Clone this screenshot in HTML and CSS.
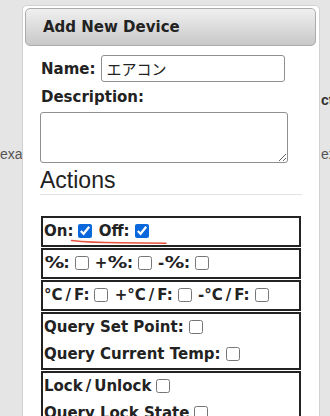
FILE: index.html
```html
<!DOCTYPE html>
<html lang="ja">
<head>
	<meta charset="UTF-8">
	<meta name="viewport" content="width=device-width,initial-scale=1">
	<title>Add New Device</title>
	<link rel="stylesheet" href="styles.css">
</head>
<body>
	<div class="page">
		<div class="bg-line bg-bold"><span></span><span>ct</span></div>
		<div class="bg-line"><span>example</span><span>ex</span></div>
	</div>

	<div class="dialog">
		<div class="dialog-head">Add New Device</div>
		<div class="dialog-body">
			<div class="name-row">
				<label class="lbl" for="devName">Name:</label>
				<input class="txt" id="devName" type="text" value="エアコン">
			</div>
			<label class="lbl desc-lbl" for="devDesc">Description:</label>
			<textarea class="desc" id="devDesc"></textarea>

			<h2 class="section">Actions</h2>

			<div class="actions">
				<div class="box box-mark">
					<div class="row">
						<label>On:<input type="checkbox" checked></label>
						<label>Off:<input type="checkbox" checked></label>
					</div>
					<!-- 赤い下線 -->
					<svg class="mark" width="98" height="6" viewBox="0 0 98 6">
						<path d="M1.5 1.5 Q 20 3.6 50 3.8 T 96 4.2" fill="none" stroke="#e5533e" stroke-width="1.5" stroke-linecap="round"/>
					</svg>
				</div>
				<div class="box">
					<div class="row">
						<label><span class="pct">%</span>:<input type="checkbox"></label>
						<label>+<span class="pct">%</span>:<input type="checkbox"></label>
						<label>-<span class="pct">%</span>:<input type="checkbox"></label>
					</div>
				</div>
				<div class="box">
					<div class="row">
						<label>°C<span class="sl">/</span>F:<input type="checkbox"></label>
						<label>+°C<span class="sl">/</span>F:<input type="checkbox"></label>
						<label>-°C<span class="sl">/</span>F:<input type="checkbox"></label>
					</div>
				</div>
				<div class="box">
					<div class="row"><label>Query Set Point:<input type="checkbox"></label></div>
					<div class="row"><label>Query Current Temp:<input type="checkbox"></label></div>
				</div>
				<div class="box">
					<div class="row"><label>Lock<span class="sl">/</span>Unlock<input type="checkbox"></label></div>
					<div class="row"><label>Query Lock State<input type="checkbox"></label></div>
				</div>
			</div>
		</div>
	</div>
</body>
</html>
```

FILE: styles.css
```css
*{
    margin: 0;
    padding: 0;
    box-sizing: border-box;
}
html, body{
    width: 330px;
    height: 416px;
    overflow: hidden;
}
body{
    background: #e5e5e5;
    font-family: "DejaVu Sans", Verdana, sans-serif;
    color: #222;
    position: relative;
}

/* 背景のページ */
.page{
    padding-top: 91px;
    font-family: "Liberation Sans", Arial, sans-serif;
    font-size: 14px;
    color: #555;
}
.bg-line{
    display: grid;
    grid-template-columns: 321px 1fr;
    height: 18px;
    line-height: 18px;
    white-space: nowrap;
    overflow: hidden;
}
.bg-line + .bg-line{
    margin-top: 36px;
}
.bg-bold{
    font-weight: bold;
    color: #333;
}

/* ダイアログ */
.dialog{
    position: absolute;
    top: 5px;
    left: 22px;
    width: 298px;
    height: 430px;
    background: #fff;
    border: 1px solid #d2d2d2;
    border-radius: 5px;
    padding: 2px 3px 0 2px;
}
.dialog-head{
    height: 38px;
    line-height: 36px;
    padding-left: 17px;
    border: 1px solid #ababab;
    border-radius: 5px;
    background: linear-gradient(#f0f0f0, #c8c8c8);
    font-size: 15px;
    font-weight: bold;
    color: #222;
}
.dialog-body{
    padding: 0 14px 0 15px;
}
.lbl{
    font-size: 15px;
    font-weight: bold;
}
.name-row{
    display: flex;
    align-items: center;
    gap: 6px;
    margin-top: 9px;
    padding-left: 1px;
}
.txt{
    width: 184px;
    height: 27px;
    padding: 0 4px;
    border: 1px solid #8f8f8f;
    border-radius: 3px;
    font-family: "Noto Sans CJK JP", sans-serif;
    font-size: 15px;
    color: #222;
    outline: none;
}
.desc-lbl{
    display: block;
    line-height: 20px;
    margin-top: 5px;
    padding-left: 1px;
}
.desc{
    display: block;
    width: 248px;
    height: 51px;
    margin-top: 5px;
    border: 1px solid #8f8f8f;
    border-radius: 3px;
}
.section{
    margin-top: 4px;
    padding-bottom: 1px;
    line-height: 26px;
    font-family: "Liberation Sans", Arial, sans-serif;
    font-size: 23px;
    font-weight: normal;
    color: #222;
    border-bottom: 1px solid #e2e2e2;
}

/* アクション */
.actions{
    margin-top: 21px;
}
.box{
    width: 260px;
    margin: 0 0 1px 1px;
    padding: 0 1px;
    border: 2px solid #222;
}
.box-mark{
    position: relative;
}
.row{
    height: 27px;
    line-height: 27px;
    font-size: 15px;
    font-weight: bold;
    white-space: nowrap;
}
/* Verdana の % は幅が広い */
.pct{
    display: inline-block;
    transform: scaleX(1.3);
    margin: 0 2px 0 2.5px;
}
.sl{
    margin: 0 3px;
}
.row input{
    width: 14px;
    height: 14px;
    margin: 0 1px 0 5px;
    vertical-align: -2px;
    accent-color: #0a68dc;
}
.mark{
    position: absolute;
    left: 27px;
    top: 21px;
}
```
